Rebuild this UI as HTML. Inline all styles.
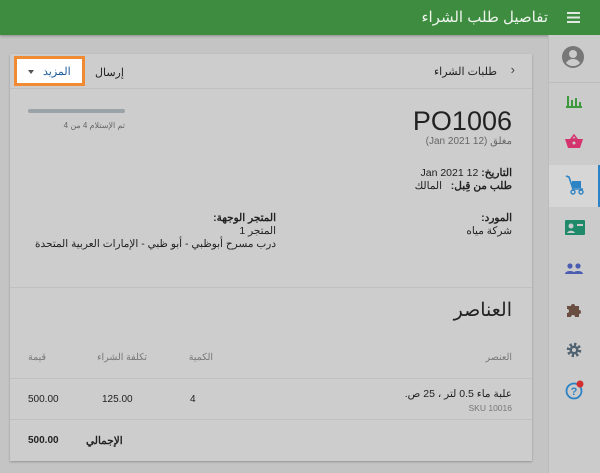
<!DOCTYPE html>
<html dir="rtl"><head><meta charset="utf-8">
<style>
*{margin:0;padding:0;box-sizing:border-box}
body{width:600px;height:473px;background:#c4c4c4;font-family:"Liberation Sans","Noto Sans CJK JP",sans-serif;position:relative;overflow:hidden;color:#222}
.a{position:absolute;white-space:nowrap}
#hdr{position:absolute;left:0;top:0;width:600px;height:35px;background:#3d8c3f;box-shadow:0 1px 3px rgba(0,0,0,.3)}
#side{position:absolute;left:548px;top:35px;width:52px;height:438px;background:#cbcbcb;border-left:1px solid #bdbdbd}
#card{position:absolute;left:10px;top:54px;width:522px;height:407px;background:#cdcdcd;box-shadow:0 1px 2px rgba(0,0,0,.25)}
.ln{position:absolute;left:0;width:522px;height:1px;background:#c0c0c0}
</style></head><body>
<div id="hdr">
 <div class="a" style="right:52px;top:8px;font-size:15px;color:#eef4ee">تفاصيل طلب الشراء</div>
 <svg class="a" style="left:567px;top:12px" width="13" height="11"><rect y="0" width="13" height="2" fill="#e0e8e0"/><rect y="4.5" width="13" height="2" fill="#e0e8e0"/><rect y="9" width="13" height="2" fill="#e0e8e0"/></svg>
</div>
<div id="side">
 <svg class="a" style="left:13px;top:11px" width="22" height="22" viewBox="0 0 22 22"><circle cx="11" cy="11" r="11" fill="#777"/><circle cx="11" cy="8" r="4" fill="#cbcbcb"/><path d="M4 17c2-3 4-4 7-4s5 1 7 4c-2 2-4 3-7 3s-5-1-7-3z" fill="#cbcbcb"/></svg>
 <div class="a" style="left:0;top:47px;width:52px;height:1px;background:#bcbcbc"></div>
 <svg class="a" style="left:17px;top:59px" width="16" height="14"><rect x="1" y="2" width="2" height="12" fill="#3c9a3c"/><rect x="5" y="6" width="2" height="8" fill="#3c9a3c"/><rect x="9" y="4" width="2" height="10" fill="#3c9a3c"/><rect x="13" y="8" width="2" height="6" fill="#3c9a3c"/><rect x="0" y="12" width="16" height="2" fill="#3c9a3c"/></svg>
 <svg class="a" style="left:16px;top:99px" width="18" height="14"><path d="M6 5L9 1l3 4z" fill="none" stroke="#d4336e" stroke-width="1.5"/><path d="M0 5h18l-3 9H3z" fill="#d4336e"/><circle cx="9" cy="9" r="1.5" fill="#cbcbcb"/></svg>
 <div class="a" style="left:0;top:130px;width:52px;height:42px;background:#d6d6d6;border-right:3px solid #2b82c5"></div>
 <svg class="a" style="left:15px;top:139px" width="22" height="22"><path d="M2 2l3 1 4 12h10" fill="none" stroke="#2b82c5" stroke-width="1.6"/><rect x="8" y="7" width="9" height="7" fill="#2b82c5"/><circle cx="9" cy="18" r="2" fill="none" stroke="#2b82c5" stroke-width="1.4"/><circle cx="17" cy="18" r="2" fill="none" stroke="#2b82c5" stroke-width="1.4"/></svg>
 <svg class="a" style="left:16px;top:185px" width="20" height="15"><rect width="20" height="15" rx="1" fill="#1e8a6a"/><circle cx="6" cy="6" r="2.5" fill="#cbcbcb"/><path d="M2 13c1-3 7-3 8 0z" fill="#cbcbcb"/><rect x="12" y="4" width="6" height="2" fill="#cbcbcb"/></svg>
 <svg class="a" style="left:16px;top:228px" width="18" height="11"><circle cx="5" cy="3" r="2.6" fill="#4a5db0"/><circle cx="13" cy="3" r="2.6" fill="#4a5db0"/><path d="M0 11c0-4 10-4 10 0zM8 11c0-4 10-4 10 0z" fill="#4a5db0"/></svg>
 <svg class="a" style="left:17px;top:266px" width="16" height="16"><path d="M1 5h4a2 2 0 1 1 4 0h4v4a2 2 0 1 1 0 4v3H9a2 2 0 1 0-4 0H1v-4a2 2 0 1 0 0-4z" fill="#6a4e42"/></svg>
 <svg class="a" style="left:17px;top:307px" width="16" height="16" viewBox="0 0 16 16"><circle cx="8" cy="8" r="5.5" fill="none" stroke="#4f6270" stroke-width="3.5" stroke-dasharray="2.2 2.1"/><circle cx="8" cy="8" r="4.5" fill="#4f6270"/><circle cx="8" cy="8" r="2" fill="#cbcbcb"/></svg>
 <svg class="a" style="left:16px;top:345px" width="20" height="20"><circle cx="9" cy="11" r="7.5" fill="none" stroke="#2b82c5" stroke-width="1.8"/><text x="9" y="15" font-size="11" font-weight="bold" fill="#2b82c5" text-anchor="middle" font-family="Liberation Sans">?</text><circle cx="15" cy="4" r="3.5" fill="#d32f2f"/></svg>
</div>
<div id="card">
 <div class="a" style="left:4px;top:2px;width:71px;height:30px;background:#fff;border:3px solid #f08a33"></div>
 <div class="a" style="left:33px;top:11px;font-size:11px;color:#1a5a9a">المزيد</div>
 <div class="a" style="left:18px;top:16px;width:0;height:0;border-left:3.5px solid transparent;border-right:3.5px solid transparent;border-top:4px solid #555"></div>
 <div class="a" style="left:85px;top:12px;font-size:11px;color:#222">إرسال</div>
 <div class="a" style="right:35px;top:11px;font-size:11px">طلبات الشراء</div>
 <div class="a" style="right:17px;top:8px;font-size:13px;color:#444">&#8249;</div>
 <div class="ln" style="top:34px"></div>
 <div class="a" style="left:18px;top:55px;width:97px;height:4px;border-radius:2px;background:#9aa3a8"></div>
 <div class="a" style="right:407px;top:67px;font-size:8px;color:#666">تم الإستلام 4 من 4</div>
 <div class="a" style="right:20px;top:52px;font-size:27px;color:#222;font-family:'Liberation Sans',sans-serif">PO1006</div>
 <div class="a" style="right:20px;top:82px;font-size:10px;color:#666">مغلق (12 Jan 2021)</div>
 <div class="a" style="right:20px;top:113px;font-size:10.5px"><b>التاريخ:</b> 12 Jan 2021</div>
 <div class="a" style="right:20px;top:126px;font-size:10.5px"><b>طلب من قِبل:</b>&nbsp;&nbsp; المالك</div>
 <div class="a" style="right:20px;top:158px;font-size:10.5px;font-weight:bold">المورد:</div>
 <div class="a" style="right:20px;top:171px;font-size:10.5px">شركة مياه</div>
 <div class="a" style="right:256px;top:158px;font-size:10.5px;font-weight:bold">المتجر الوجهة:</div>
 <div class="a" style="right:256px;top:171px;font-size:10.5px">المتجر 1</div>
 <div class="a" style="right:256px;top:184px;font-size:10.5px">درب مسرح أبوظبي - أبو ظبي - الإمارات العربية المتحدة</div>
 <div class="ln" style="top:233px"></div>
 <div class="a" style="right:20px;top:245px;font-size:19px">العناصر</div>
 <div class="a" style="right:20px;top:298px;font-size:9.5px;color:#777">العنصر</div>
 <div class="a" style="right:319px;top:298px;font-size:9.5px;color:#777">الكمية</div>
 <div class="a" style="right:385px;top:298px;font-size:9.5px;color:#777">تكلفة الشراء</div>
 <div class="a" style="right:486px;top:298px;font-size:9.5px;color:#777">قيمة</div>
 <div class="ln" style="top:324px"></div>
 <div class="a" style="right:20px;top:334px;font-size:10.5px">علبة ماء 0.5 لتر ، 25 ص.</div>
 <div class="a" style="right:20px;top:349px;font-size:8.5px;color:#777">SKU 10016</div>
 <div class="a" style="left:180px;top:340px;font-size:10px">4</div>
 <div class="a" style="left:92px;top:340px;font-size:10px">125.00</div>
 <div class="a" style="left:18px;top:340px;font-size:10px">500.00</div>
 <div class="ln" style="top:365px"></div>
 <div class="a" style="left:76px;top:381px;font-size:10.5px;font-weight:bold">الإجمالي</div>
 <div class="a" style="left:18px;top:381px;font-size:10px;font-weight:bold">500.00</div>
</div>
</body></html>
